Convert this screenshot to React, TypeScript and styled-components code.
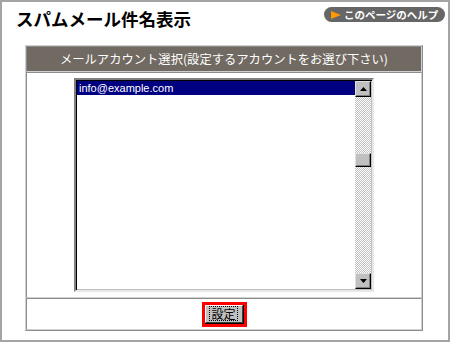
import React from 'react';
import styled, { createGlobalStyle } from 'styled-components';

const GlobalStyle = createGlobalStyle`
  body {
    margin: 0;
    background: #fff;
    font-family: "Liberation Sans", "Noto Sans CJK JP", sans-serif;
  }
`;

const Frame = styled.div`
  width: 450px;
  height: 342px;
  box-sizing: border-box;
  border: 2px solid #a4a4a4;
  background: #fff;
`;

const TitleBar = styled.div`
  height: 43px;
  box-sizing: border-box;
  padding: 0 3px 0 14px;
  display: flex;
  justify-content: space-between;
  align-items: flex-start;
`;

const Title = styled.h1`
  margin: 7px 0 0;
  font-family: "Noto Sans CJK JP", sans-serif;
  font-size: 17.5px;
  line-height: 20px;
  font-weight: 700;
  color: #000;
`;

const HelpPill = styled.div`
  margin-top: 5px;
  height: 15px;
  width: 121px;
  box-sizing: border-box;
  padding-left: 7px;
  border-radius: 8px;
  background: #666;
  display: flex;
  align-items: center;
  gap: 3px;
  color: #fff;
  font-family: "Noto Sans CJK JP", sans-serif;
  font-size: 10.5px;
  font-weight: 700;
  line-height: 15px;
  white-space: nowrap;
`;

const Table = styled.div`
  margin-left: 23px;
  width: 398px;
  box-sizing: border-box;
  border: 1px solid;
  border-color: #d0d0d0 #8c8c8c #8c8c8c #d0d0d0;
  display: flex;
  flex-direction: column;
`;

const Cell = styled.div<{ $height: number; $head?: boolean }>`
  height: ${({ $height }) => $height}px;
  box-sizing: border-box;
  border: 1px solid;
  border-color: #8c8c8c #d0d0d0 #d0d0d0 #8c8c8c;
  background: ${({ $head }) => ($head ? '#716a62' : '#fff')};
  display: flex;
  align-items: center;
  justify-content: center;
`;

const HeadText = styled.span`
  color: #fff;
  font-family: "Noto Sans CJK JP", sans-serif;
  font-size: 12.3px;
  line-height: 14px;
`;

const ListBox = styled.div`
  width: 300px;
  height: 214px;
  box-sizing: border-box;
  border: 2px solid;
  border-color: #808080 #e8e8e8 #e8e8e8 #808080;
  box-shadow: inset 1px 1px 0 #000, inset -1px -1px 0 #c0c0c0;
  display: flex;
`;

const Options = styled.div`
  flex: 1;
  padding: 1px 0 0 1px;
`;

const Option = styled.div<{ $selected?: boolean }>`
  height: 14px;
  padding-left: 2px;
  font-size: 11px;
  line-height: 14px;
  color: ${({ $selected }) => ($selected ? '#fff' : '#000')};
  background: ${({ $selected }) => ($selected ? '#000080' : 'transparent')};
`;

const Scrollbar = styled.div`
  width: 16px;
  margin: 1px 1px 1px 0;
  display: flex;
  flex-direction: column;
  background: repeating-conic-gradient(#c0c0c0 0 25%, #fff 0 50%) 0 0 / 2px 2px;
`;

const ScrollButton = styled.div`
  width: 16px;
  height: 16px;
  box-sizing: border-box;
  background: #c0c0c0;
  border: 1px solid;
  border-color: #e0e0e0 #000 #000 #e0e0e0;
  box-shadow: inset -1px -1px 0 #808080;
  display: flex;
  align-items: center;
  justify-content: center;
`;

const Track = styled.div`
  flex: 1;
  padding-top: 56px;
`;

const Thumb = styled(ScrollButton)`
  height: 14px;
`;

const RedFrame = styled.div`
  width: 45px;
  height: 25px;
  box-sizing: border-box;
  border: 3px solid #ff0000;
  background: #000;
`;

const SubmitButton = styled.div`
  width: 38px;
  height: 18px;
  box-sizing: border-box;
  background: #c0c0c0;
  border: 1px solid;
  border-color: #fff #404040 #404040 #fff;
  display: flex;
  align-items: center;
  justify-content: center;
`;

const FocusText = styled.span`
  border: 1px dotted #000;
  padding: 0 1px;
  font-family: "Noto Sans CJK JP", sans-serif;
  font-size: 12px;
  line-height: 13px;
  color: #000;
`;

const Arrow = ({ up }: { up?: boolean }) => (
  <svg width="7" height="4" viewBox="0 0 7 4">
    <polygon points={up ? '3.5,0 7,4 0,4' : '0,0 7,0 3.5,4'} fill="#000" />
  </svg>
);

export default function App() {
  return (
    <>
      <GlobalStyle />
      <Frame>
        <TitleBar>
          <Title>スパムメール件名表示</Title>
          <HelpPill>
            <svg width="10" height="8" viewBox="0 0 10 8">
              <polygon points="0,0 10,4 0,8" fill="#ff9900" />
            </svg>
            このページのヘルプ
          </HelpPill>
        </TitleBar>
        <Table>
          <Cell $height={26} $head>
            <HeadText>メールアカウント選択(設定するアカウントをお選び下さい)</HeadText>
          </Cell>
          <Cell $height={226}>
            <ListBox>
              <Options>
                <Option $selected>info@example.com</Option>
              </Options>
              <Scrollbar>
                <ScrollButton>
                  <Arrow up />
                </ScrollButton>
                <Track>
                  <Thumb />
                </Track>
                <ScrollButton>
                  <Arrow />
                </ScrollButton>
              </Scrollbar>
            </ListBox>
          </Cell>
          <Cell $height={32}>
            <RedFrame>
              <SubmitButton>
                <FocusText>設定</FocusText>
              </SubmitButton>
            </RedFrame>
          </Cell>
        </Table>
      </Frame>
    </>
  );
}
